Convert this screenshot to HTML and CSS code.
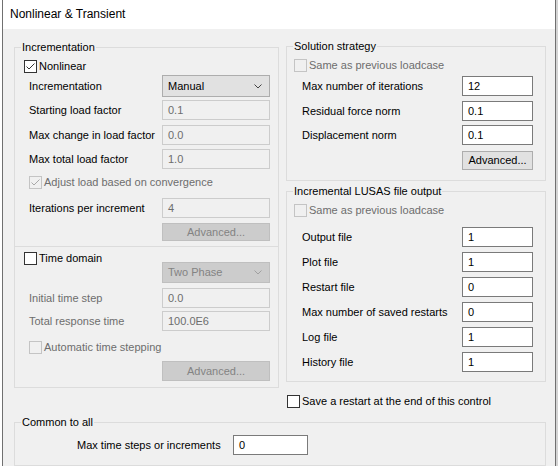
FILE: index.html
```html
<!DOCTYPE html>
<html>
<head>
<meta charset="utf-8">
<link rel="stylesheet" href="styles.css">
</head>
<body>
<div class="window">
  <div class="titlebar">Nonlinear &amp; Transient</div>
  <div class="content">
    <div class="columns">
      <div class="group left-box">
        <span class="legend">Incrementation</span>
        <div class="sec sec-inc">
          <div class="chk-row r-nonlin"><span class="cb"><svg viewBox="0 0 11 11" width="11" height="11"><polyline points="1.5,5.5 4,8 9.5,2.5" fill="none" stroke="#333" stroke-width="1"/></svg></span><span>Nonlinear</span></div>
          <div class="row r-sel"><span class="lbl">Incrementation</span><span class="select">Manual<svg width="8" height="5" viewBox="0 0 8 5"><polyline points="0.5,0.5 4,4 7.5,0.5" fill="none" stroke="#444" stroke-width="1"/></svg></span></div>
          <div class="row r-start"><span class="lbl">Starting load factor</span><span class="input dis">0.1</span></div>
          <div class="row r-maxch"><span class="lbl">Max change in load factor</span><span class="input dis">0.0</span></div>
          <div class="row r-maxtot"><span class="lbl">Max total load factor</span><span class="input dis">1.0</span></div>
          <div class="chk-row r-adjust ind"><span class="cb dis"><svg viewBox="0 0 11 11" width="11" height="11"><polyline points="1.5,5.5 4,8 9.5,2.5" fill="none" stroke="#a8a8a8" stroke-width="1"/></svg></span><span class="gray">Adjust load based on convergence</span></div>
          <div class="row r-iter"><span class="lbl">Iterations per increment</span><span class="input dis">4</span></div>
          <div class="row r-adv1"><span></span><span class="btn dis">Advanced...</span></div>
        </div>
        <div class="sec sec-time">
          <div class="chk-row r-time"><span class="cb"></span><span>Time domain</span></div>
          <div class="row r-sel2"><span></span><span class="select dis">Two Phase<svg width="8" height="5" viewBox="0 0 8 5"><polyline points="0.5,0.5 4,4 7.5,0.5" fill="none" stroke="#a0a0a0" stroke-width="1"/></svg></span></div>
          <div class="row r-init"><span class="lbl gray">Initial time step</span><span class="input dis">0.0</span></div>
          <div class="row r-total"><span class="lbl gray">Total response time</span><span class="input dis">100.0E6</span></div>
          <div class="chk-row r-auto ind"><span class="cb dis"></span><span class="gray">Automatic time stepping</span></div>
          <div class="row r-adv2"><span></span><span class="btn dis tall">Advanced...</span></div>
        </div>
      </div>
      <div class="right-col">
        <div class="group sol-box">
          <span class="legend">Solution strategy</span>
          <div class="chk-row r-same"><span class="cb dis"></span><span class="gray">Same as previous loadcase</span></div>
          <div class="row rr r-first"><span class="lbl">Max number of iterations</span><span class="input">12</span></div>
          <div class="row rr"><span class="lbl">Residual force norm</span><span class="input">0.1</span></div>
          <div class="row rr r-disp"><span class="lbl">Displacement norm</span><span class="input">0.1</span></div>
          <div class="row rr r-adv3"><span></span><span class="btn">Advanced...</span></div>
        </div>
        <div class="group lusas-box">
          <span class="legend">Incremental LUSAS file output</span>
          <div class="chk-row r-same"><span class="cb dis"></span><span class="gray">Same as previous loadcase</span></div>
          <div class="row rr r-out"><span class="lbl">Output file</span><span class="input">1</span></div>
          <div class="row rr"><span class="lbl">Plot file</span><span class="input">1</span></div>
          <div class="row rr"><span class="lbl">Restart file</span><span class="input">0</span></div>
          <div class="row rr"><span class="lbl">Max number of saved restarts</span><span class="input">0</span></div>
          <div class="row rr"><span class="lbl">Log file</span><span class="input">1</span></div>
          <div class="row rr"><span class="lbl">History file</span><span class="input">1</span></div>
        </div>
        <div class="chk-row r-save"><span class="cb"></span><span>Save a restart at the end of this control</span></div>
      </div>
    </div>
    <div class="group common-box">
      <span class="legend">Common to all</span>
      <div class="common-row"><span class="common-lbl">Max time steps or increments</span><span class="input common-input">0</span></div>
    </div>
  </div>
</div>
</body>
</html>
```

FILE: styles.css
```css
* { box-sizing: border-box; }
html, body { margin: 0; padding: 0; }
body {
  background: #ffffff;
  font-family: "Liberation Sans", Arial, sans-serif;
  font-size: 11px;
  line-height: 13px;
  color: #000;
}
.window {
  margin-left: 2px;
  width: 554px;
  height: 466px;
  border-left: 1px solid #707070;
  border-right: 1px solid #707070;
  box-shadow: 2px 0 0 #d4d4d4;
  background: #f0f0f0;
  display: flex;
  flex-direction: column;
}
.titlebar {
  height: 29px;
  background: #ffffff;
  font-size: 12px;
  display: flex;
  align-items: center;
  padding-left: 7px;
  padding-bottom: 1px;
}
.content {
  flex: 1;
  padding: 18px 9px 0 11px;
}
.columns {
  display: grid;
  grid-template-columns: 265px 260px;
  column-gap: 7px;
  align-items: start;
}
.group {
  position: relative;
  border: 1px solid #dcdcdc;
}
.legend {
  position: absolute;
  top: -7px;
  left: 6px;
  padding: 0 1px;
  background: #f0f0f0;
  white-space: nowrap;
}
.gray { color: #6d6d6d; }

/* rows */
.row {
  display: flex;
  align-items: center;
  justify-content: space-between;
  height: 20px;
}
.lbl { white-space: nowrap; }
.chk-row {
  display: flex;
  align-items: center;
  height: 13px;
  white-space: nowrap;
}
.cb {
  width: 13px;
  height: 13px;
  border: 1px solid #333333;
  background: #ffffff;
  margin-right: 2px;
  flex: none;
  display: flex;
  align-items: center;
  justify-content: center;
}
.cb.dis { border-color: #c4c4c4; background: #f0f0f0; }
.cb svg { display: block; }

.input {
  height: 20px;
  border: 1px solid #7a7a7a;
  background: #ffffff;
  padding-left: 5px;
  display: flex;
  align-items: center;
  flex: none;
}
.input.dis { background: #f0f0f0; border-color: #cccccc; color: #6d6d6d; }
.select {
  height: 22px;
  width: 108px;
  border: 1px solid #adadad;
  background: #e1e1e1;
  padding: 0 7px 0 5px;
  display: flex;
  align-items: center;
  justify-content: space-between;
  flex: none;
}
.select.dis { background: #cccccc; border-color: #bfbfbf; color: #838383; }
.btn {
  height: 19px;
  border: 1px solid #adadad;
  background: #e1e1e1;
  display: flex;
  align-items: center;
  justify-content: center;
  flex: none;
}
.btn.dis { background: #cccccc; border-color: #bfbfbf; color: #838383; }

/* left box */
.left-box { height: 341px; }
.sec { padding: 0 8px 0 9px; }
.sec .row { padding-left: 5px; }
.sec .input, .sec .btn { width: 108px; }
.sec-inc { padding-top: 12px; padding-bottom: 5px; }
.r-sel { height: 22px; margin-top: 2px; }
.r-start { margin-top: 3px; }
.r-maxch { margin-top: 5px; }
.r-maxtot { margin-top: 4px; }
.ind { padding-left: 5px; }
.r-adjust { margin-top: 7px; }
.r-iter { margin-top: 9px; }
.r-adv1 { margin-top: 5px; height: 18px; }
.r-adv1 .btn { height: 18px; }
.sec-time { border-top: 1px solid #dcdcdc; padding-top: 5px; }
.r-sel2 { height: 21px; margin-top: -3px; }
.r-sel2 .select { height: 21px; }
.r-init { margin-top: 5px; }
.r-total { margin-top: 3px; }
.r-auto { margin-top: 10px; }
.r-adv2 { margin-top: 7px; }
.btn.tall { height: 20px; }

/* right column */
.right-col { margin-top: -1px; }
.sol-box, .lusas-box { padding: 12px 12px 10px 7px; }
.lusas-box { margin-top: 10px; padding-bottom: 9px; }
.rr { padding-left: 8px; }
.rr .input { width: 71px; }
.rr .btn { width: 71px; }
.r-first { margin-top: 4px; }
.rr + .rr { margin-top: 5px; }
.sol-box .r-disp { margin-top: 4px; }
.r-out { margin-top: 10px; }
.r-save { margin-top: 13px; margin-left: 1px; }

/* common */
.common-box { margin-top: 14px; padding: 12px 0 10px 62px; }
.common-row { display: flex; align-items: center; height: 20px; }
.common-lbl { width: 156px; white-space: nowrap; }
.common-input { width: 75px; }
```
